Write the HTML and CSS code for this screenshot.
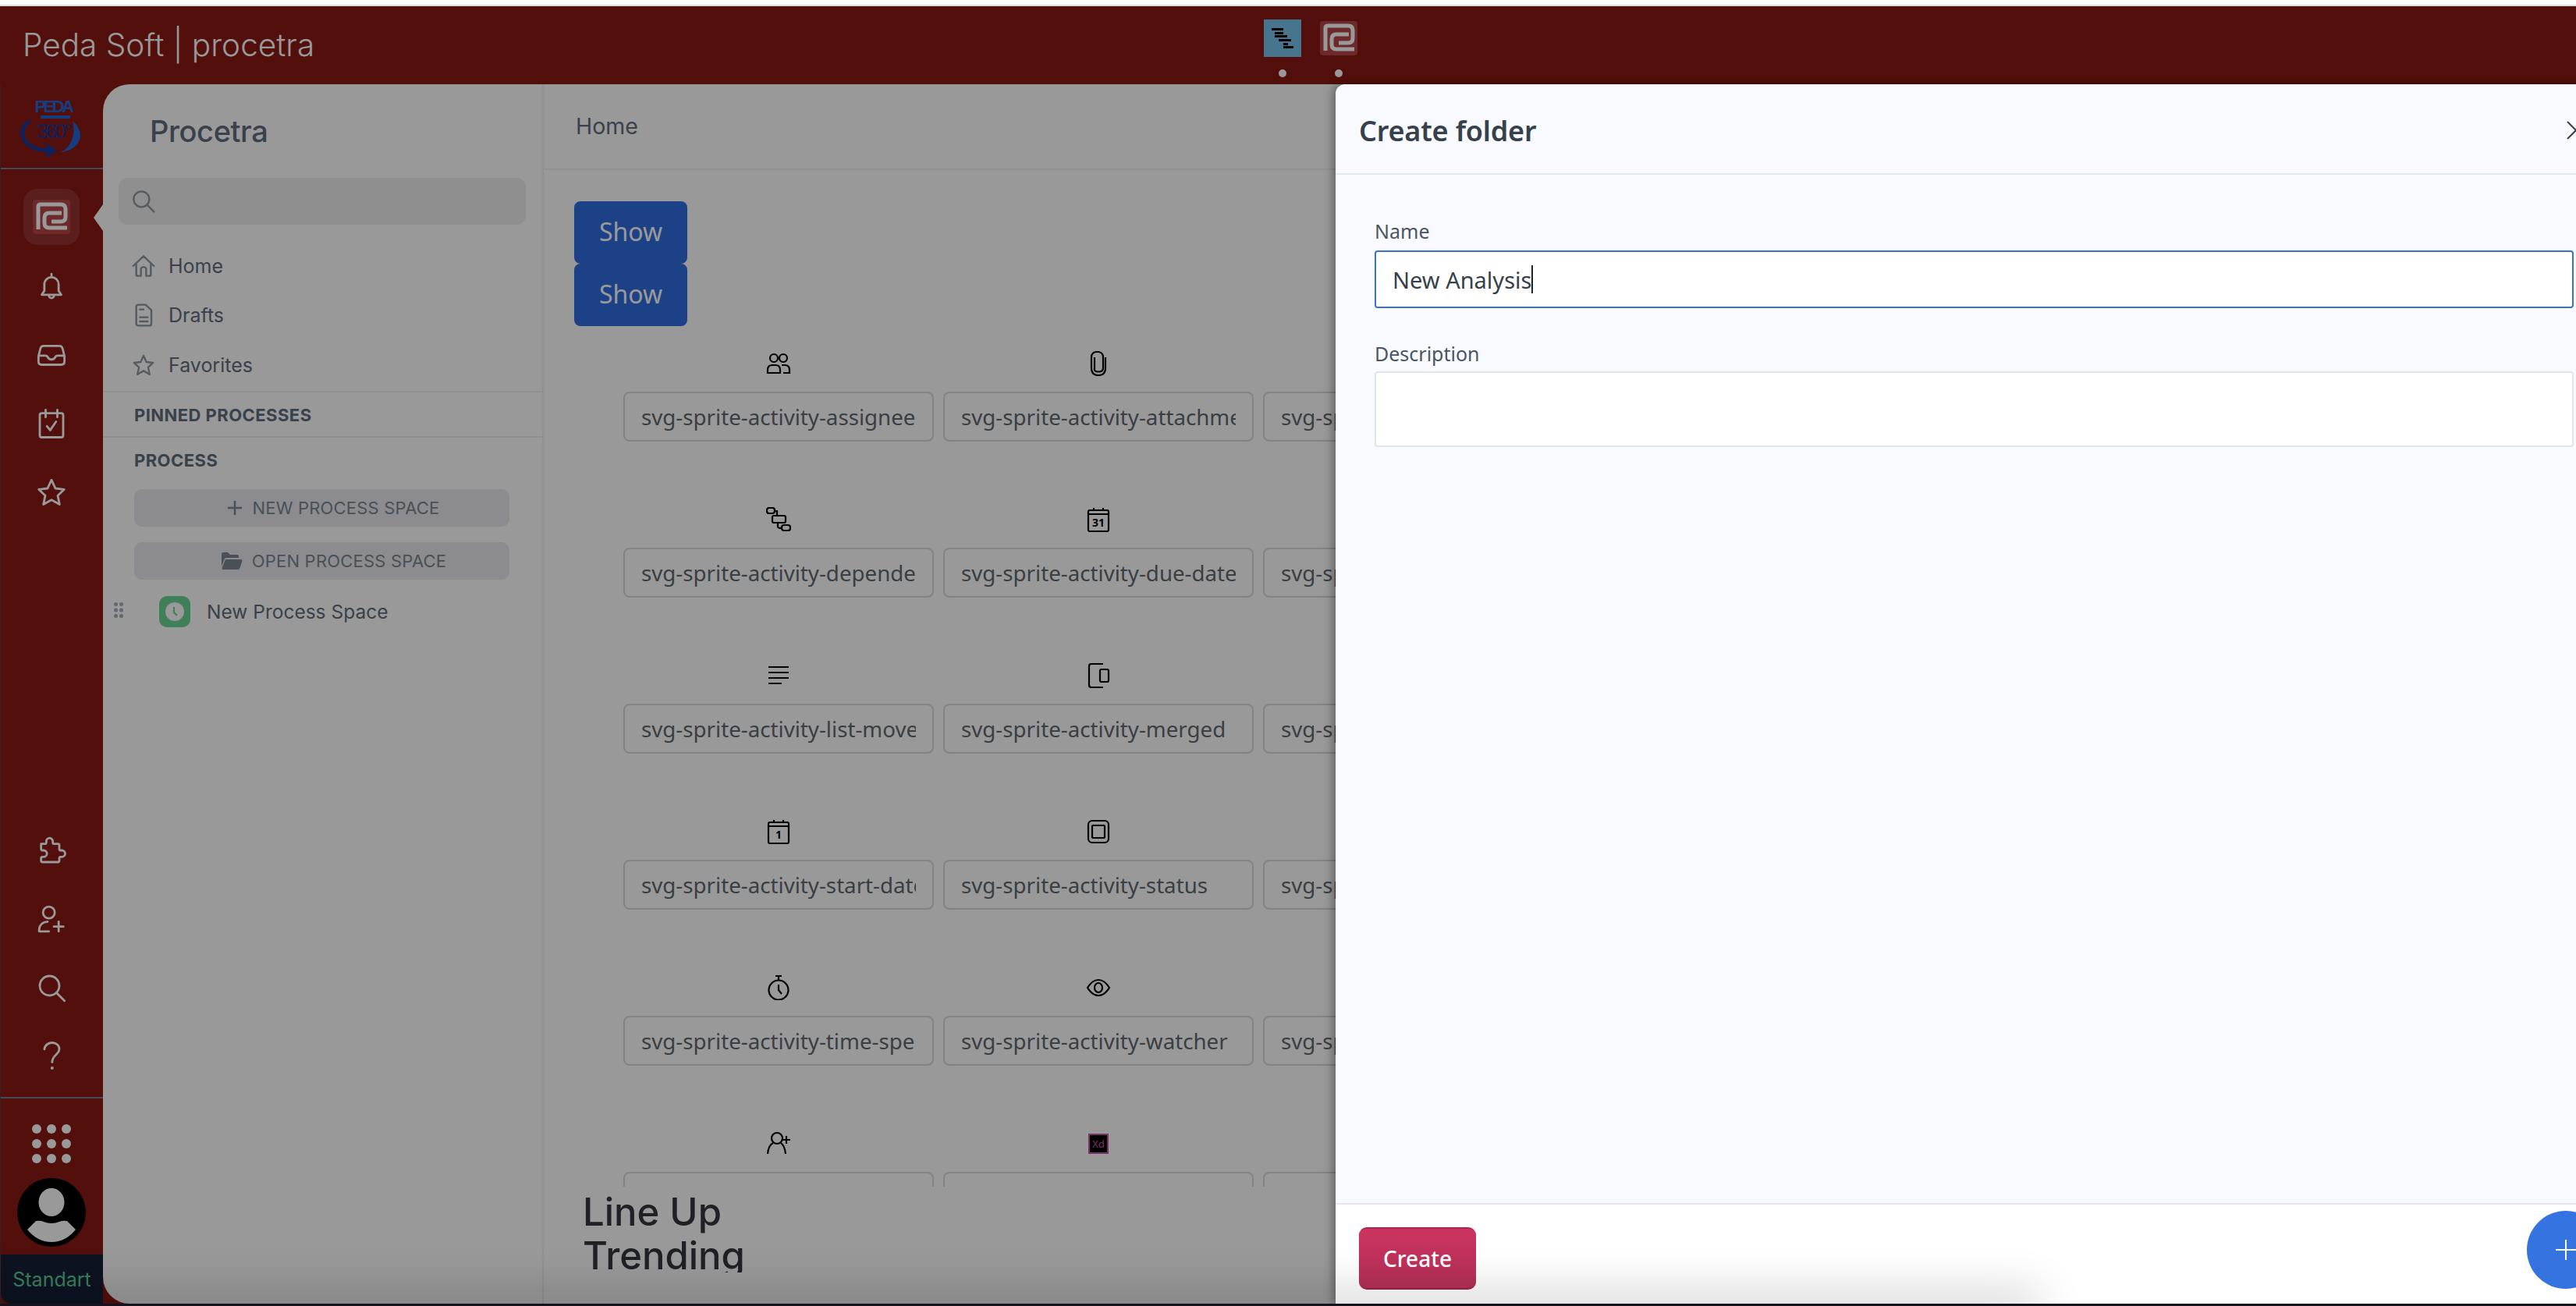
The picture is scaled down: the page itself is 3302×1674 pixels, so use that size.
FILE: index.html
```html
<!DOCTYPE html>
<html lang="en">
<head>
  <meta charset="UTF-8" />
  <meta name="viewport" content="width=device-width, initial-scale=1.0"/>
  <title>Procetra</title>
  <link rel="stylesheet" href="styles.css">
</head>
<body>
  <svg class="sprites" width="0" height="0">
    <symbol id="procetra-mark" viewBox="0 0 48 44">
      <path d="M7 38V9Q7 6 10 6H36Q42 6 42 12V22Q42 28 36 28H24" fill="none" stroke="#fff" stroke-width="5"/>
      <path d="M37 17H21Q15 17 15 23V30Q15 36 21 36H44" fill="none" stroke="#fff" stroke-width="5"/>
    </symbol>
  </svg>

  <div class="top-strip"></div>

  <div class="app">
    <header class="topbar">
      <div class="brand">Peda Soft | procetra</div>
      <div class="switcher">
        <div class="switch-item">
          <div class="gantt-tile">
            <svg width="48" height="48" viewBox="0 0 48 48" fill="#000">
              <rect x="10" y="11" width="15" height="3"/><rect x="14" y="16" width="11" height="3"/>
              <rect x="14" y="20" width="16" height="3"/><rect x="19" y="25" width="16" height="3"/>
              <rect x="25" y="30" width="6" height="3"/><rect x="25" y="34" width="13" height="3"/>
            </svg>
          </div>
          <span class="switch-dot"></span>
        </div>
        <div class="switch-item">
          <div class="mark-tile"><svg width="48" height="44"><use href="#procetra-mark"/></svg></div>
          <span class="switch-dot"></span>
        </div>
      </div>
    </header>

    <div class="shell">
      <!-- Icon rail -->
      <nav class="rail">
        <div class="rail-logo">
          <svg width="80" height="90" viewBox="0 -10 80 90">
            <text class="logo-peda" x="42" y="20" text-anchor="middle">PEDA</text>
            <rect x="26" y="24" width="38" height="4" fill="#2468d8"/>
            <text class="logo-360" x="42" y="53" text-anchor="middle">360°</text>
            <path d="M12 31C-6 44 2 66 34 69" fill="none" stroke="#133a9f" stroke-width="5"/>
            <path d="M33 60L47 69L34 78z" fill="#133a9f"/>
            <path d="M67 31C86 48 76 68 52 71C64 66 72 50 67 31z" fill="#2468d8"/>
          </svg>
        </div>
        <div class="rail-main">
          <div class="rail-active"><div class="mark-tile"><svg width="48" height="44"><use href="#procetra-mark"/></svg></div></div>
          <svg class="rail-icon" viewBox="0 0 24 24"><path d="M12 2.500V5M6.500 15.500V10.500a5.500 5.500 0 0 1 11 0V15.500L19.500 18.500H4.500zM10 18.500v.5a2 2 0 0 0 4 0v-.5"/></svg>
          <svg class="rail-icon" viewBox="0 0 24 24"><path d="M6 5H18Q20 5 20.500 7L22 13V17Q22 19.500 19.500 19.500H4.500Q2 19.500 2 17V13L3.500 7Q4 5 6 5zM2.500 12.500H7.500Q8.500 12.500 9 13.500 10 15.500 12 15.500T15 13.500Q15.500 12.500 16.500 12.500H21.500"/></svg>
          <svg class="rail-icon" viewBox="0 0 24 24"><path d="M4.500 4H19.500Q21 4 21 5.500V21Q21 22.500 19.500 22.500H4.500Q3 22.500 3 21V5.500Q3 4 4.500 4zM7.500 1.500V7M16.500 1.500V7M8.500 14L11 17 15.500 10.500"/></svg>
          <svg class="rail-icon" viewBox="0 0 24 24"><path d="M12 2.500L15 9 21.800 9.800 16.800 14.500 18.200 21.300 12 17.900 5.800 21.300 7.200 14.500 2.200 9.800 9 9z"/></svg>
        </div>
        <div class="rail-lower">
          <svg class="rail-icon" viewBox="0 0 24 24"><path d="M4 7h3a1 1 0 0 0 1 -1v-1a2.500 2.500 0 0 1 5 0v1a1 1 0 0 0 1 1h3a1 1 0 0 1 1 1v3a1 1 0 0 0 1 1h1a2.500 2.500 0 0 1 0 5h-1a1 1 0 0 0 -1 1v2a1 1 0 0 1 -1 1h-12a1 1 0 0 1 -1 -1v-2a1 1 0 0 1 1 -1h1a2.500 2.500 0 0 0 0 -5h-1a1 1 0 0 1 -1 -1v-3a1 1 0 0 1 1 -1"/></svg>
          <svg class="rail-icon" viewBox="0 0 24 24"><circle cx="10" cy="7" r="4.500"/><path d="M2.500 21.500V20Q3 14.500 9 14M2.500 21.500H10M17.500 14V21.500M13.800 17.800H21.200"/></svg>
          <svg class="rail-icon" viewBox="0 0 24 24"><circle cx="10.500" cy="10.500" r="7.500"/><path d="M16 16L22 22"/></svg>
          <svg class="rail-icon" viewBox="0 0 24 24"><path d="M6.500 6.500C7 3 10 1.500 12.500 1.500 15.500 1.500 18 3.500 18 6.500 18 10.500 12.500 11 12.500 16.500"/><circle class="solid" cx="12.500" cy="21" r="1.200"/></svg>
        </div>
        <div class="rail-apps">
          <div class="apps-grid">
            <i></i><i></i><i></i><i></i><i></i><i></i><i></i><i></i><i></i>
          </div>
          <svg width="88" height="88" viewBox="0 0 88 88">
            <circle cx="44" cy="44" r="44" fill="#000"/>
            <ellipse cx="44" cy="31" rx="16.500" ry="18" fill="#fff"/>
            <path d="M13 66L24 55Q30 54 34 56 44 60 54 56 58 54 64 55L75 66Q62 82 44 82 26 82 13 66z" fill="#fff"/>
          </svg>
        </div>
        <div class="plan-badge">Standart</div>
      </nav>

      <div class="panel">
        <!-- Process sidebar -->
        <aside class="sidebar">
          <div class="sidebar-title">Procetra</div>
          <div class="search-box">
            <svg class="side-icon" viewBox="0 0 24 24"><circle cx="10" cy="10" r="7.500"/><path d="M15.500 15.500L22 22"/></svg>
          </div>
          <ul class="side-nav">
            <li>
              <svg class="side-icon" viewBox="0 0 24 24"><path d="M2 12L12 2.500 22 12M5 10V20Q5 21.500 6.500 21.500H9.500V15Q9.500 13 12 13T14.500 15V21.500H17.500Q19 21.500 19 20V10"/></svg>
              Home
            </li>
            <li>
              <svg class="side-icon" viewBox="0 0 24 24"><path d="M7 2H14L19.500 7V20Q19.500 22 17.500 22H7Q5 22 5 20V4Q5 2 7 2zM8.500 6.500H12M8.500 14H16M8.500 18H16"/></svg>
              Drafts
            </li>
            <li>
              <svg class="side-icon" viewBox="0 0 24 24"><path d="M12 3L14.700 9 21.200 9.700 16.400 14.100 17.800 20.800 12 17.500 6.200 20.800 7.600 14.100 2.800 9.700 9.300 9z"/></svg>
              Favorites
            </li>
          </ul>
          <div class="side-section side-section-pinned">PINNED PROCESSES</div>
          <div class="side-section">PROCESS</div>
          <button class="side-btn">
            <svg class="btn-icon" viewBox="0 0 20 20"><path d="M10 1V19M1 10H19"/></svg>
            NEW PROCESS SPACE
          </button>
          <button class="side-btn">
            <svg class="btn-icon btn-icon-folder" viewBox="0 0 28 24"><path d="M1 3Q1 1 3 1H9L12 4H21Q23 4 23 6V8H7Q5 8 4.500 10L1 19z"/><path d="M7 10H26Q28 10 27.400 12L24.500 21Q24 23 22 23H3Q1 23 1.600 21L5 12Q5.500 10 7 10z"/></svg>
            OPEN PROCESS SPACE
          </button>
          <div class="space-row">
            <svg class="drag-handle" width="12" height="20" viewBox="0 0 12 20"><circle cx="2.500" cy="2.500" r="2.500"/><circle cx="9.500" cy="2.500" r="2.500"/><circle cx="2.500" cy="10" r="2.500"/><circle cx="9.500" cy="10" r="2.500"/><circle cx="2.500" cy="17.500" r="2.500"/><circle cx="9.500" cy="17.500" r="2.500"/></svg>
            <div class="space-icon">
              <svg width="24" height="24" viewBox="0 0 24 24"><circle cx="12" cy="12" r="12" fill="#fff"/><path d="M11 6V13L15 17" fill="none" stroke="#69d593" stroke-width="2"/></svg>
            </div>
            <span>New Process Space</span>
          </div>
        </aside>

        <main class="content">
          <div class="content-head">Home</div>
          <div class="scroll-area">
            <button class="show-btn">Show</button>
            <button class="show-btn">Show</button>

            <!-- Sprite preview -->
            <div class="sprite-grid">
              <div class="sprite-cell">
                <svg class="sprite" viewBox="0 0 32 32"><circle cx="10" cy="9" r="5"/><circle cx="22" cy="9" r="5"/><path d="M2 28V24Q2 18 8 18H12Q18 18 18 24V28zM20 18H24Q30 18 30 24V28H22"/></svg>
                <input class="sprite-name" readonly value="svg-sprite-activity-assignee">
              </div>
              <div class="sprite-cell">
                <svg class="sprite" viewBox="0 0 32 32"><path d="M25 8V22Q25 31 16 31T7 22V8Q7 1 14.500 1T22 8V22Q22 26.500 16 26.500T11 22V8"/></svg>
                <input class="sprite-name" readonly value="svg-sprite-activity-attachment">
              </div>
              <div class="sprite-cell"><div class="sprite"></div><input class="sprite-name" readonly value="svg-sprite-activity-comment"></div>

              <div class="sprite-cell">
                <svg class="sprite" viewBox="0 0 32 32"><rect x="1" y="1" width="10" height="7" rx="3"/><rect x="8" y="11" width="17" height="9" rx="2"/><rect x="20" y="23" width="11" height="7" rx="3"/><path d="M11 5H14V11M15 20V25Q15 27 20 27"/></svg>
                <input class="sprite-name" readonly value="svg-sprite-activity-dependency">
              </div>
              <div class="sprite-cell">
                <svg class="sprite" viewBox="0 0 32 32"><rect x="3" y="4" width="26" height="27" rx="2"/><path d="M3 9H29M10 1V5M22 1V5"/><text class="cal-day" x="16" y="25" text-anchor="middle">31</text></svg>
                <input class="sprite-name" readonly value="svg-sprite-activity-due-date">
              </div>
              <div class="sprite-cell"><div class="sprite"></div><input class="sprite-name" readonly value="svg-sprite-activity-label"></div>

              <div class="sprite-cell">
                <svg class="sprite" viewBox="0 0 32 32"><path d="M3 5H29M3 12H29M3 19H29M3 26H20"/></svg>
                <input class="sprite-name" readonly value="svg-sprite-activity-list-move">
              </div>
              <div class="sprite-cell">
                <svg class="sprite" viewBox="0 0 32 32"><path d="M22 1H7Q4 1 4 4V28Q4 31 7 31H22"/><rect x="18" y="8" width="11" height="16" rx="2"/></svg>
                <input class="sprite-name" readonly value="svg-sprite-activity-merged">
              </div>
              <div class="sprite-cell"><div class="sprite"></div><input class="sprite-name" readonly value="svg-sprite-activity-priority"></div>

              <div class="sprite-cell">
                <svg class="sprite" viewBox="0 0 32 32"><rect x="3" y="4" width="26" height="27" rx="2"/><path d="M3 9H29M10 1V5M22 1V5"/><text class="cal-day" x="16" y="25" text-anchor="middle">1</text></svg>
                <input class="sprite-name" readonly value="svg-sprite-activity-start-date">
              </div>
              <div class="sprite-cell">
                <svg class="sprite" viewBox="0 0 32 32"><rect x="3" y="2" width="26" height="28" rx="5"/><rect x="8" y="8" width="16" height="16" rx="1"/></svg>
                <input class="sprite-name" readonly value="svg-sprite-activity-status">
              </div>
              <div class="sprite-cell"><div class="sprite"></div><input class="sprite-name" readonly value="svg-sprite-activity-subtask"></div>

              <div class="sprite-cell">
                <svg class="sprite" viewBox="0 0 32 32"><circle cx="16" cy="19" r="12.500"/><path d="M12 1H20M16 1V6M16 12V19L20 24"/></svg>
                <input class="sprite-name" readonly value="svg-sprite-activity-time-spent">
              </div>
              <div class="sprite-cell">
                <svg class="sprite" viewBox="0 0 32 32"><path d="M2 16Q8 6 16 6T30 16Q24 26 16 26T2 16z"/><ellipse cx="16" cy="16" rx="5" ry="6"/></svg>
                <input class="sprite-name" readonly value="svg-sprite-activity-watcher">
              </div>
              <div class="sprite-cell"><div class="sprite"></div><input class="sprite-name" readonly value="svg-sprite-activity-title"></div>

              <div class="sprite-cell">
                <svg class="sprite" viewBox="0 0 32 32"><ellipse cx="14" cy="9" rx="7" ry="7"/><path d="M2 29Q3 18 9 15M19 15Q24 19 25 29M26 6V16M21 11H31"/></svg>
                <input class="sprite-name" readonly value="svg-sprite-add-user">
              </div>
              <div class="sprite-cell">
                <div class="xd-tile">Xd</div>
                <input class="sprite-name" readonly value="svg-sprite-adobe-xd">
              </div>
              <div class="sprite-cell"><div class="sprite"></div><input class="sprite-name" readonly value="svg-sprite-airtable"></div>
            </div>
          </div>
          <div class="trending">Line Up<br>Trending</div>
        </main>
      </div>
    </div>

    <div class="backdrop"></div>

    <!-- Create folder drawer -->
    <section class="drawer">
      <div class="drawer-head">
        <h2>Create folder</h2>
        <svg class="drawer-close" width="24" height="24" viewBox="0 0 24 24"><path d="M1 1L23 23M23 1L1 23"/></svg>
      </div>
      <div class="drawer-body">
        <label class="field-label">Name</label>
        <div class="field-input field-focus">New Analysis<span class="caret"></span></div>
        <label class="field-label field-label-next">Description</label>
        <div class="field-input field-area"></div>
      </div>
      <div class="drawer-foot">
        <button class="create-btn">Create</button>
        <div class="fab">
          <svg width="26" height="26" viewBox="0 0 26 26"><path d="M13 0V26M0 13H26" stroke="#fff" stroke-width="2"/></svg>
        </div>
      </div>
    </section>

    <div class="bottom-glow"></div>
  </div>

  <div class="end-strip"></div>
</body>
</html>
```

FILE: styles.css
```css
* {
  box-sizing: border-box;
}
html, body {
  height: 100%;
  margin: 0;
  overflow: hidden;
}
body {
  display: flex;
  flex-direction: column;
  font-family: Inter, "Noto Sans", sans-serif;
  background-color: #fff;
  color: #5f6e7d;
}
button {
  font-family: inherit;
  border: 0;
  padding: 0;
}
ul {
  list-style: none;
  margin: 0;
  padding: 0;
}
.sprites {
  position: absolute;
}

.top-strip {
  flex: none;
  height: 8px;
  border-bottom: 2px solid #ddd;
}
.end-strip {
  flex: none;
  height: 3px;
  background-color: #15131f;
}

.app {
  position: relative;
  flex: 1;
  min-height: 0;
  display: flex;
  flex-direction: column;
  overflow: hidden;
  background-color: #891913;
}

/* Top bar */
.topbar {
  position: relative;
  flex: none;
  height: 100px;
  display: flex;
  align-items: center;
  padding-left: 29px;
}
.brand {
  font-size: 40.500px;
  font-weight: 300;
  color: #fff;
  padding-bottom: 2px;
}
.switcher {
  position: absolute;
  top: 17px;
  left: 1620px;
  display: flex;
  gap: 24px;
}
.switch-item {
  display: flex;
  flex-direction: column;
  align-items: center;
  width: 48px;
}
.switch-item .mark-tile {
  margin-top: 2px;
  margin-bottom: 2px;
}
.gantt-tile {
  width: 48px;
  height: 48px;
  background-color: #77c3ed;
}
.mark-tile {
  width: 48px;
  height: 44px;
  border-radius: 4px;
  background-color: #b74646;
}
.switch-dot {
  width: 10px;
  height: 10px;
  margin-top: 16px;
  border-radius: 50%;
  background-color: #fff;
}

/* Rail */
.shell {
  flex: 1;
  min-height: 0;
  display: flex;
}
.rail {
  flex: none;
  width: 132px;
  display: flex;
  flex-direction: column;
  border-left: 1px solid #5a3a3a;
}
.rail-logo {
  height: 109px;
  padding: 6px 0 0 25px;
  border-bottom: 2px solid #7b7b8e;
}
.logo-peda {
  font-family: "Liberation Sans", sans-serif;
  font-size: 22px;
  font-weight: 700;
  letter-spacing: -3.500px;
  fill: #2468d8;
}
.logo-360 {
  font-family: "Liberation Sans", sans-serif;
  font-size: 26px;
  letter-spacing: -3px;
  fill: #133a9f;
}
.rail-main {
  flex: 1;
  display: flex;
  flex-direction: column;
  align-items: center;
  gap: 48px;
  padding: 25px 1px 0 0;
}
.rail-active {
  position: relative;
  width: 72px;
  height: 72px;
  margin-bottom: -15px;
  border-radius: 18px;
  background-color: rgba(255, 255, 255, 0.12);
  display: flex;
  align-items: center;
  justify-content: center;
}
.rail-active::after {
  content: "";
  position: absolute;
  top: 20px;
  right: -30px;
  border-style: solid;
  border-width: 17px 12px 17px 0;
  border-color: transparent #fff transparent transparent;
}
.rail-icon {
  flex: none;
  width: 40px;
  height: 40px;
  fill: none;
  stroke: #fff;
  stroke-width: 1.700;
  stroke-linecap: round;
  stroke-linejoin: round;
}
.rail-icon .solid {
  fill: #fff;
  stroke: none;
}
.rail-lower {
  display: flex;
  flex-direction: column;
  align-items: center;
  gap: 48px;
  height: 356px;
  padding: 18px 1px 0 0;
  border-bottom: 2px solid #7b7b8e;
}
.rail-apps {
  display: flex;
  flex-direction: column;
  align-items: center;
  padding: 33px 1px 0 0;
  height: 200px;
}
.apps-grid {
  display: grid;
  grid-template-columns: repeat(3, 12px);
  gap: 7px;
  margin-bottom: 19px;
}
.apps-grid i {
  width: 12px;
  height: 12px;
  border-radius: 50%;
  background-color: #fff;
}
.plan-badge {
  flex: none;
  height: 63px;
  line-height: 65px;
  text-align: center;
  font-size: 25px;
  color: #5ad694;
  background-color: #18203a;
  border-bottom-left-radius: 14px;
}

/* Panel */
.panel {
  flex: 1;
  min-width: 0;
  display: flex;
  background-color: #fff;
  border-top-left-radius: 34px;
  border-bottom-left-radius: 34px;
  overflow: hidden;
}
.sidebar {
  flex: none;
  width: 565px;
  border-right: 2px solid #eef0fa;
}
.sidebar-title {
  height: 109px;
  padding: 37px 0 0 60px;
  font-size: 38px;
  font-weight: 500;
  line-height: 46px;
  letter-spacing: -0.4px;
}
.search-box {
  height: 60px;
  margin: 11px 21px 0 20px;
  padding: 0 16px;
  display: flex;
  align-items: center;
  border-radius: 12px;
  background-color: #eee;
}
.side-icon {
  flex: none;
  width: 32px;
  height: 32px;
  fill: none;
  stroke: #8f98a0;
  stroke-width: 1.800;
  stroke-linecap: round;
  stroke-linejoin: round;
}
.side-nav {
  padding-top: 21px;
  padding-bottom: 1px;
}
.side-nav li {
  height: 63.500px;
  padding-left: 36px;
  display: flex;
  align-items: center;
  gap: 16px;
  font-size: 25px;
}
.side-section {
  height: 58px;
  padding-left: 40px;
  line-height: 58px;
  font-size: 22px;
  font-weight: 700;
  letter-spacing: 0.45px;
}
.side-section-pinned {
  height: 60px;
  border-top: 2px solid #eef0fa;
  border-bottom: 2px solid #eef0fa;
}
.side-btn {
  width: 481px;
  height: 48px;
  margin: 0 0 20px 40px;
  padding-left: 30px;
  display: flex;
  align-items: center;
  justify-content: center;
  gap: 12px;
  border-radius: 10px;
  background-color: #e9e9f0;
  font-size: 22px;
  letter-spacing: 0.2px;
  color: #7b8593;
}
.side-section + .side-btn {
  margin-top: 8px;
}
.btn-icon {
  width: 20px;
  height: 20px;
  fill: none;
  stroke: #7b8593;
  stroke-width: 2.500;
}
.btn-icon-folder {
  width: 28px;
  height: 24px;
  fill: #7b8593;
  stroke: none;
}
.space-row {
  height: 40px;
  margin-top: 21px;
  padding-left: 14px;
  display: flex;
  align-items: center;
  font-size: 24.500px;
}
.drag-handle {
  fill: #a0acbd;
  margin-top: -4px;
}
.space-icon {
  width: 40px;
  height: 40px;
  margin: 0 21px 0 46px;
  border-radius: 10px;
  background-color: #69d593;
  display: flex;
  align-items: center;
  justify-content: center;
}

/* Main content */
.content {
  flex: 1;
  min-width: 0;
  display: flex;
  flex-direction: column;
}
.content-head {
  flex: none;
  height: 110px;
  padding: 36px 0 0 41px;
  border-bottom: 2px solid #eef0fa;
  font-size: 28.500px;
  line-height: 36px;
}
.scroll-area {
  flex: 1;
  min-height: 0;
  padding: 40px 0 0 39px;
  overflow: hidden;
}
.show-btn {
  display: block;
  width: 145px;
  height: 80px;
  padding-bottom: 3px;
  border-radius: 8px;
  background-color: #2f6de1;
  color: #fff;
  font-family: "Noto Sans", sans-serif;
  font-size: 32px;
}
.sprite-grid {
  display: grid;
  grid-template-columns: repeat(3, 398px);
  column-gap: 12px;
  row-gap: 84px;
  margin: 32px 0 0 63px;
}
.sprite-cell {
  display: flex;
  flex-direction: column;
  align-items: center;
  gap: 20px;
}
.sprite {
  width: 32px;
  height: 32px;
  fill: none;
  stroke: #000;
  stroke-width: 2.200;
}
.cal-day {
  font-family: "Noto Sans", sans-serif;
  font-size: 14px;
  font-weight: 700;
  fill: #000;
  stroke: none;
}
.xd-tile {
  width: 26px;
  height: 26px;
  margin: 3px 0;
  border: 2px solid #d04fae;
  background-color: #000;
  color: #d04fae;
  font-family: "Noto Sans", sans-serif;
  font-size: 13px;
  line-height: 22px;
  text-align: center;
}
.sprite-name {
  width: 398px;
  height: 64px;
  padding: 0 21px;
  border: 2px solid #d3dce3;
  border-radius: 8px;
  background-color: #fff;
  color: #616a72;
  font-family: "Noto Sans", sans-serif;
  font-size: 27.700px;
  outline: none;
}
.trending {
  flex: none;
  height: 110px;
  margin-bottom: 40px;
  padding: 5px 0 0 50px;
  overflow: hidden;
  font-size: 49px;
  font-weight: 500;
  line-height: 56px;
  color: #343740;
}

/* Overlay */
.backdrop {
  position: absolute;
  inset: 0;
  background-color: rgba(0, 0, 0, 0.4);
}
.drawer {
  position: absolute;
  top: 100px;
  bottom: 0;
  left: 1712px;
  width: 1637px;
  display: flex;
  flex-direction: column;
  border-top-left-radius: 12px;
  background-color: #f8faff;
  box-shadow: -4px 0 12px rgba(0, 0, 0, 0.35);
  font-family: "Noto Sans", sans-serif;
  color: #36414c;
}
.drawer-head {
  flex: none;
  height: 116px;
  padding: 5px 30px 0;
  display: flex;
  align-items: center;
  justify-content: space-between;
  border-bottom: 2px solid #dde6ee;
}
.drawer-head h2 {
  margin: 0;
  font-size: 36px;
  font-weight: 600;
  letter-spacing: -0.2px;
}
.drawer-close {
  position: absolute;
  top: 47px;
  left: 1578px;
  fill: none;
  stroke: #36414c;
  stroke-width: 2;
}
.drawer-body {
  flex: 1;
  padding: 54px 50px 0;
}
.field-label {
  display: block;
  font-size: 25px;
  line-height: 36px;
  margin-bottom: 7px;
  color: #4a5560;
}
.field-label-next {
  margin-top: 40px;
  margin-bottom: 5px;
}
.field-input {
  display: flex;
  align-items: center;
  height: 74px;
  padding: 0 21px;
  border: 2px solid #dde6ee;
  border-radius: 4px;
  background-color: #fff;
  font-size: 29px;
  color: #36414c;
}
.field-focus {
  border-color: #3a72c4;
}
.field-area {
  height: 97px;
}
.caret {
  width: 2px;
  height: 36px;
  background-color: #222;
}
.drawer-foot {
  position: relative;
  flex: none;
  height: 129px;
  padding: 29px 30px 0;
  border-top: 2px solid #dde6ee;
  background-color: #fff;
}
.create-btn {
  width: 150px;
  height: 80px;
  border-radius: 10px;
  border-top: 2px solid #b0244f;
  border-bottom: 2px solid #9f2349;
  background: linear-gradient(#cb3460, #b42f56);
  color: #fff;
  font-size: 28px;
  font-family: "Noto Sans", sans-serif;
  font-weight: 500;
}
.fab {
  position: absolute;
  top: 8px;
  left: 1527px;
  width: 100px;
  height: 100px;
  border-radius: 50%;
  background-color: #3573e0;
  display: flex;
  align-items: center;
  justify-content: center;
}
.bottom-glow {
  position: absolute;
  left: -100px;
  bottom: -10px;
  width: 2700px;
  height: 10px;
  box-shadow: 0 0 60px 14px rgba(0, 0, 0, 0.2);
}
```
